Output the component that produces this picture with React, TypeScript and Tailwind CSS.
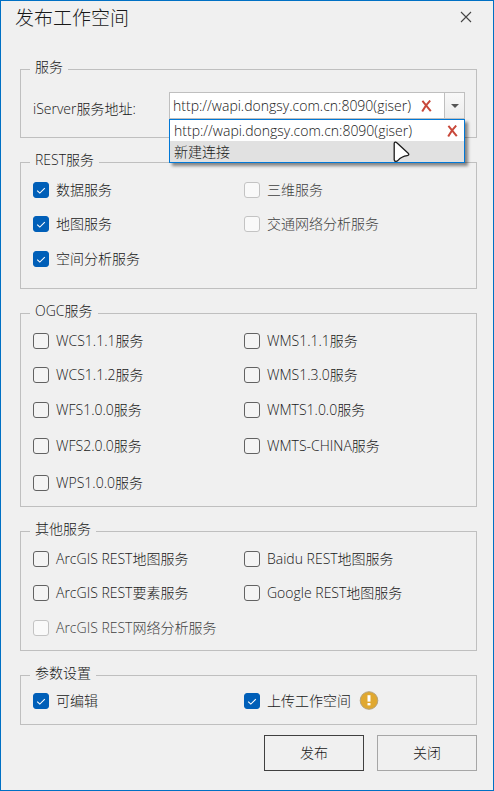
import { useId, useState, type ReactNode } from "react";

const SERVER = "http://wapi.dongsy.com.cn:8090(giser)";
const NEW_CONNECTION = "新建连接";

type Option = { label: string; checked?: boolean; disabled?: boolean };

function Group({ title, className, children }: { title: string; className: string; children: ReactNode }) {
  return (
    <fieldset className={`min-w-0 border border-[#bfbfbf] pl-3 ${className}`}>
      <legend className="-ml-[3px] px-[5px] pb-1 leading-5">{title}</legend>
      {children}
    </fieldset>
  );
}

function CheckOption({ label, checked = false, disabled = false }: Option) {
  const id = useId();
  const [on, setOn] = useState(checked);
  return (
    <div className="flex h-5 items-center gap-[7px]">
      <span className="grid size-4 shrink-0">
        <input
          id={id}
          type="checkbox"
          checked={on}
          disabled={disabled}
          onChange={(e) => setOn(e.target.checked)}
          className="peer col-start-1 row-start-1 size-4 appearance-none rounded-[3px] border border-[#626262] bg-[#f4f4f4] checked:border-[#005fb8] checked:bg-[#005fb8] disabled:border-[#c3c3c3] disabled:bg-[#f9f9f9]"
        />
        <svg
          viewBox="0 0 16 16"
          className="pointer-events-none invisible col-start-1 row-start-1 size-4 peer-checked:visible"
          fill="none"
          stroke="#fff"
          strokeWidth="1.1"
          aria-hidden="true"
        >
          <path d="M4.2 8.6 6.8 11.1 11.8 6.1" />
        </svg>
      </span>
      <label htmlFor={id} className={`whitespace-nowrap ${disabled ? "text-[#404040]" : ""}`}>
        {label}
      </label>
    </div>
  );
}

function OptionGrid({ rows, options }: { rows: string; options: Option[] }) {
  return (
    <div className={`grid grid-cols-2 ${rows}`}>
      {options.map((o) => (
        <CheckOption key={o.label} {...o} />
      ))}
    </div>
  );
}

function RedCross() {
  return (
    <svg viewBox="0 0 11 12" className="h-3 w-[11px]" fill="none" stroke="#c8483a" strokeWidth="2" aria-hidden="true">
      <path d="M1.4 .8Q4.6 4.6 9.8 11.2" />
      <path d="M9.2 .6Q4.8 5 1.2 11.4" />
    </svg>
  );
}

export default function App() {
  const [server, setServer] = useState(SERVER);
  return (
    <main className="flex min-h-screen flex-col border border-[#0070c4] bg-[#f0f0f0] pr-4 pb-[19px] pl-[19px] font-['Open_Sans','Noto_Sans_CJK_SC',sans-serif] text-sm font-light text-[#181818]">
      <header className="-ml-[5px] flex h-14 items-start justify-between pr-[5px]">
        <h1 className="text-[19px] leading-[34px] font-light">发布工作空间</h1>
        <button type="button" aria-label="关闭窗口" className="mt-[10px]">
          <svg viewBox="0 0 12 12" className="size-3" fill="none" stroke="#444" strokeWidth="1.1" aria-hidden="true">
            <path d="M1 1 11 11M11 1 1 11" />
          </svg>
        </button>
      </header>

      <div className="flex flex-col gap-3">
        <Group title="服务" className="pt-[11px] pr-[11px] pb-[18px]">
          <div className="flex items-end">
            <label htmlFor="server" className="w-[136px] shrink-0 leading-5">
              iServer服务地址:
            </label>
            <div className="relative min-w-0 flex-1">
              <select
                id="server"
                value={server}
                onChange={(e) => setServer(e.target.value)}
                className="block h-[27px] w-full appearance-none border border-[#bfbfbf] bg-white pr-12 pl-[3px]"
              >
                <option>{SERVER}</option>
                <option>{NEW_CONNECTION}</option>
              </select>
              <button type="button" aria-label="清除" className="absolute top-2 right-[33px]">
                <RedCross />
              </button>
              <span className="pointer-events-none absolute top-px right-px flex h-[25px] w-5 items-center justify-center border-l border-[#bfbfbf] bg-linear-to-b from-[#f8f8f8] to-[#ececec]">
                <svg viewBox="0 0 8 4" className="h-1 w-2" fill="#555" aria-hidden="true">
                  <path d="M0 0H8L4 4Z" />
                </svg>
              </span>
              <ul
                aria-label="服务地址列表"
                className="absolute inset-x-0 top-full z-10 border border-[#0078d7] bg-white shadow-[3px_3px_3px_rgba(0,0,0,0.45)]"
              >
                <li className="flex h-[21px] items-center justify-between pr-[6px] pl-1">
                  <button type="button" className="whitespace-nowrap" onClick={() => setServer(SERVER)}>
                    {SERVER}
                  </button>
                  <button type="button" aria-label="删除连接">
                    <RedCross />
                  </button>
                </li>
                <li className="flex h-[21px] items-center bg-[#e1e1e1] pl-1">
                  <button type="button" onClick={() => setServer(NEW_CONNECTION)}>
                    {NEW_CONNECTION}
                  </button>
                </li>
              </ul>
              <svg
                viewBox="0 0 17 22"
                className="pointer-events-none absolute top-[49px] right-[55px] z-20 h-[22px] w-[17px]"
                fill="#fff"
                stroke="#1c1c1c"
                strokeWidth="1.3"
                strokeLinejoin="round"
                aria-hidden="true"
              >
                <path d="M1.2 2.6C1.2 1.1 2.7.7 3.8 1.8L15.2 12.2C16.4 13.4 15.8 14.4 14.2 14.6C9.8 15.2 8 16 5 19.4C3.6 21 1.4 20.8 1.2 18.6Z" />
              </svg>
            </div>
          </div>
        </Group>

        <Group title="REST服务" className="pt-[6px] pr-[21px] pb-[19px]">
          <OptionGrid
            rows="grid-rows-[34px_35px_20px]"
            options={[
              { label: "数据服务", checked: true },
              { label: "三维服务", disabled: true },
              { label: "地图服务", checked: true },
              { label: "交通网络分析服务", disabled: true },
              { label: "空间分析服务", checked: true },
            ]}
          />
        </Group>

        <Group title="OGC服务" className="pt-[6px] pr-[21px] pb-[13px]">
          <OptionGrid
            rows="grid-rows-[34px_35px_36px_37px_20px]"
            options={[
              { label: "WCS1.1.1服务" },
              { label: "WMS1.1.1服务" },
              { label: "WCS1.1.2服务" },
              { label: "WMS1.3.0服务" },
              { label: "WFS1.0.0服务" },
              { label: "WMTS1.0.0服务" },
              { label: "WFS2.0.0服务" },
              { label: "WMTS-CHINA服务" },
              { label: "WPS1.0.0服务" },
            ]}
          />
        </Group>

        <Group title="其他服务" className="pt-[6px] pr-[21px] pb-3">
          <OptionGrid
            rows="grid-rows-[34px_35px_20px]"
            options={[
              { label: "ArcGIS REST地图服务" },
              { label: "Baidu REST地图服务" },
              { label: "ArcGIS REST要素服务" },
              { label: "Google REST地图服务" },
              { label: "ArcGIS REST网络分析服务", disabled: true },
            ]}
          />
        </Group>

        <Group title="参数设置" className="pt-1 pr-[21px] pb-[13px]">
          <div className="grid grid-cols-2">
            <CheckOption label="可编辑" checked />
            <div className="flex h-5 items-center gap-2">
              <CheckOption label="上传工作空间" checked />
              <svg viewBox="0 0 20 20" className="size-5" role="img" aria-label="提示">
                <circle cx="10" cy="9.5" r="8.8" fill="#e0a830" stroke="#b5a27a" strokeWidth="1" />
                <path d="M8.5 4.2H11.5V10.6H8.5Z" fill="#fff" />
                <path d="M8.5 12H11.5V14.4H8.5Z" fill="#fff" />
              </svg>
            </div>
          </div>
        </Group>
      </div>

      <footer className="mt-[10px] flex justify-end gap-[13px]">
        <button type="button" className="h-9 w-[100px] border border-[#404040]">
          发布
        </button>
        <button type="button" className="h-9 w-[100px] border border-[#a6a6a6]">
          关闭
        </button>
      </footer>
    </main>
  );
}
